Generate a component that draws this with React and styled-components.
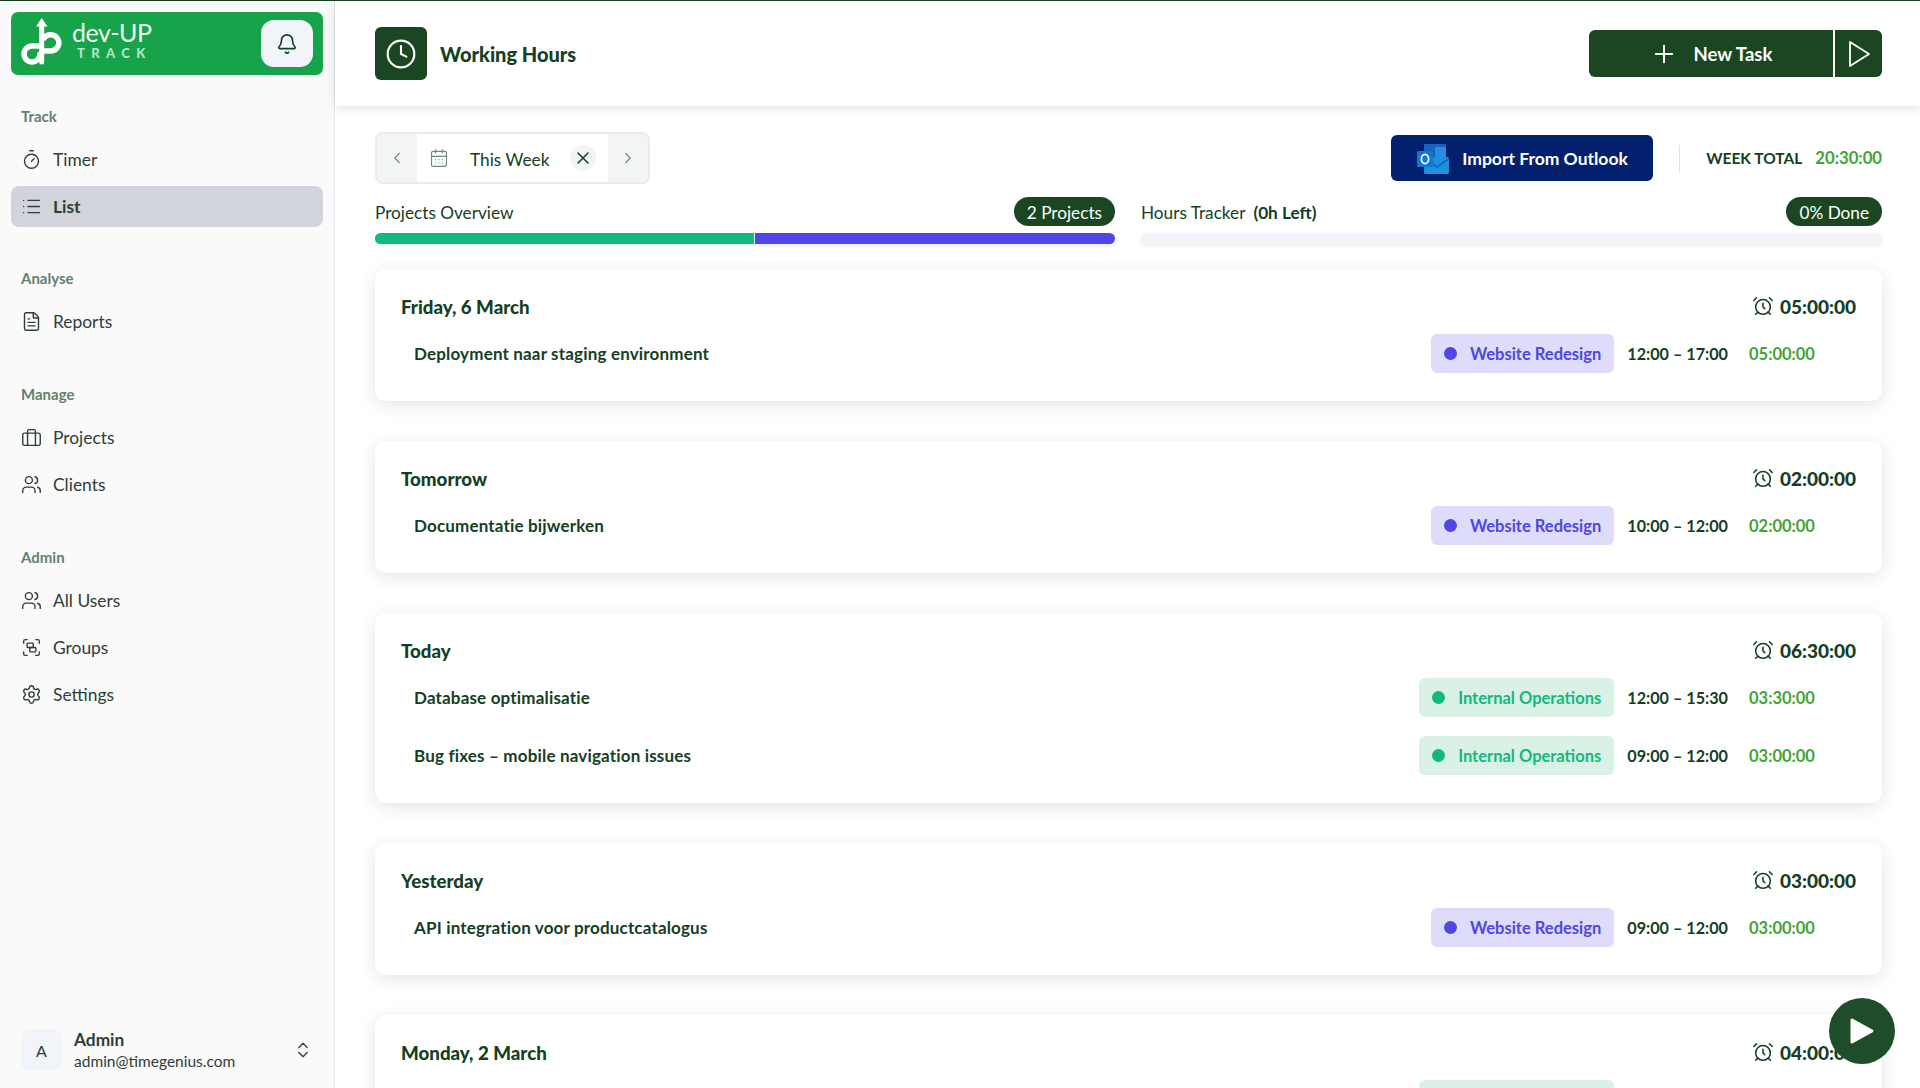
import React from "react";
import styled, { createGlobalStyle } from "styled-components";
import {
  Timer, List, FileText, Users, Group, Settings, Bell, Clock, AlarmClock,
  CalendarDays, X, ChevronLeft, ChevronRight, ChevronsUpDown, Plus,
} from "lucide-react";

const Global = createGlobalStyle`
  html, body { margin: 0; padding: 0; height: 100%; }
  body { font-family: "Lato", "Liberation Sans", sans-serif; color: #14401f; background: #fff; }
  * { box-sizing: border-box; }
`;

const Page = styled.div`
  display: flex;
  height: 1088px;
  overflow: hidden;
  border-top: 1px solid #14401f;
`;
const Sidebar = styled.aside`
  width: 335px;
  flex: none;
  display: flex;
  flex-direction: column;
  background: #fafafa;
  border-right: 1px solid #e5e7eb;
  padding: 11px 11px 0 11px;
`;
const LogoBar = styled.div`
  height: 63px;
  background: #16a34a;
  border-radius: 7px;
  display: flex;
  align-items: center;
  justify-content: space-between;
  padding: 0 10px 0 10px;
  color: #fff;
`;
const Brand = styled.div`
  display: flex;
  align-items: center;
  gap: 9px;
`;
const BrandText = styled.div`
  display: flex;
  flex-direction: column;
  align-items: flex-start;
  padding-bottom: 7px;
`;
const BrandName = styled.span`
  font-size: 25px;
  line-height: 22px;
  font-weight: 400;
  color: #ecfdf3;
  letter-spacing: -0.5px;
`;
const BrandSub = styled.span`
  font-size: 13px;
  line-height: 12px;
  margin-top: 4px;
  font-weight: 900;
  letter-spacing: 6.4px;
  color: #b4e4c6;
  padding-left: 5px;
`;
const BellButton = styled.div`
  width: 52px;
  height: 47px;
  border-radius: 13px;
  background: #f1f5f9;
  display: flex;
  align-items: center;
  justify-content: center;
  color: #14401f;
`;
const Section = styled.div`
  margin-top: ${(p) => p.$top}px;
  display: flex;
  flex-direction: column;
  gap: 6px;
`;
const SectionLabel = styled.div`
  font-size: 15px;
  line-height: 15px;
  font-weight: 700;
  color: #64806e;
  padding-left: 10px;
  margin-bottom: 9px;
`;
const NavItem = styled.div`
  height: 41px;
  display: flex;
  align-items: center;
  gap: 11px;
  padding-left: 10px;
  border-radius: 8px;
  font-size: 17.4px;
  font-weight: ${(p) => (p.$active ? 700 : 400)};
  color: #2f3e36;
  background: ${(p) => (p.$active ? "#d1d5db" : "transparent")};
  svg { width: 21px; height: 21px; flex: none; }
`;
const UserFooter = styled.div`
  margin-top: auto;
  height: 42px;
  margin-bottom: 17px;
  display: flex;
  align-items: center;
  padding-left: 10px;
  padding-right: 10px;
`;
const Avatar = styled.div`
  width: 41px;
  height: 42px;
  border-radius: 9px;
  background: #f1f5f9;
  display: flex;
  align-items: center;
  justify-content: center;
  font-size: 16px;
  color: #2f3e36;
`;
const UserInfo = styled.div`
  flex: 1;
  padding-left: 12px;
  color: #2f3e36;
`;
const UserName = styled.div`
  font-size: 17.3px;
  line-height: 20px;
  font-weight: 700;
  padding-top: 1px;
`;
const UserMail = styled.div`
  font-size: 15.5px;
  line-height: 20px;
  margin-top: 1px;
`;

const Main = styled.main`
  flex: 1;
  min-width: 0;
  display: flex;
  flex-direction: column;
  background: #fff;
  position: relative;
`;
const Header = styled.header`
  height: 105px;
  flex: none;
  display: flex;
  align-items: center;
  justify-content: space-between;
  padding: 0 38px 0 40px;
  background: #fff;
  box-shadow: 0 2px 10px rgba(0, 0, 0, 0.12);
  position: relative;
`;
const TitleGroup = styled.div`
  display: flex;
  align-items: center;
  gap: 13px;
`;
const TitleIcon = styled.div`
  width: 52px;
  height: 53px;
  border-radius: 6px;
  background: #1a4721;
  color: #fff;
  display: flex;
  align-items: center;
  justify-content: center;
`;
const Title = styled.h1`
  margin: 0;
  font-size: 20px;
  font-weight: 900;
  color: #14401f;
`;
const SplitButton = styled.div`
  display: flex;
  gap: 2px;
  height: 47px;
  color: #fff;
`;
const NewTask = styled.div`
  width: 244px;
  background: #1a4721;
  border-radius: 6px 0 0 6px;
  display: flex;
  align-items: center;
  justify-content: center;
  gap: 16px;
  font-size: 18.6px;
  font-weight: 700;
`;
const RunPart = styled.div`
  width: 47px;
  background: #1a4721;
  border-radius: 0 6px 6px 0;
  display: flex;
  align-items: center;
  justify-content: center;
`;
const Content = styled.div`
  flex: 1;
  min-height: 0;
  overflow: hidden;
  padding: 26px 38px 0 40px;
`;
const Toolbar = styled.div`
  display: flex;
  align-items: center;
  justify-content: space-between;
  height: 52px;
`;
const DatePicker = styled.div`
  width: 275px;
  height: 52px;
  border: 2px solid #e9eaec;
  border-radius: 8px;
  display: flex;
  overflow: hidden;
  background: #f3f4f6;
`;
const DateNav = styled.div`
  width: 40px;
  display: flex;
  align-items: center;
  justify-content: center;
  color: #6f8a78;
`;
const DateBody = styled.div`
  flex: 1;
  background: #fff;
  display: flex;
  align-items: center;
  padding: 0 12px 0 12px;
  font-size: 17.3px;
  color: #14401f;
`;
const DateText = styled.span`
  flex: 1;
  padding-left: 21px;
  padding-top: 2px;
`;
const ClearButton = styled.span`
  width: 26px;
  height: 26px;
  border-radius: 50%;
  background: #f3f4f6;
  display: flex;
  align-items: center;
  justify-content: center;
`;
const ToolbarRight = styled.div`
  display: flex;
  align-items: center;
`;
const OutlookButton = styled.div`
  width: 262px;
  height: 46px;
  border-radius: 6px;
  background: #03206f;
  color: #fff;
  display: flex;
  align-items: center;
  gap: 13px;
  padding-left: 26px;
  padding-top: 1px;
  font-size: 17.5px;
  font-weight: 700;
`;
const Divider = styled.div`
  width: 1px;
  height: 27px;
  background: #dbe5df;
  margin: 0 26px;
`;
const WeekLabel = styled.span`
  font-size: 15.5px;
  font-weight: 700;
  color: #14401f;
`;
const WeekValue = styled.span`
  font-size: 16.7px;
  font-weight: 700;
  color: #3fa535;
  margin-left: 13px;
`;
const Overview = styled.div`
  display: grid;
  grid-template-columns: 740px 741px;
  column-gap: 26px;
  margin-top: 13px;
`;
const OverviewCol = styled.div`
  display: flex;
  flex-direction: column;
  min-width: 0;
`;
const OverviewHead = styled.div`
  display: flex;
  align-items: center;
  justify-content: space-between;
  height: 29px;
  font-size: 17.2px;
  color: #14401f;
`;
const OverviewLabel = styled.span`
  padding-top: 2px;
`;
const Strong = styled.strong`
  font-weight: 700;
  margin-left: 8px;
`;
const Pill = styled.span`
  height: 29px;
  padding: 1px 13px 0;
  border-radius: 15px;
  background: #1a4721;
  color: #fff;
  display: flex;
  align-items: center;
  font-size: 17.2px;
`;
const Bar = styled.div`
  margin-top: 7px;
  height: 11px;
  border-radius: 6px;
  background: #f1f4f9;
  overflow: hidden;
  display: flex;
  gap: 1px;
  box-shadow: 0 2px 4px rgba(0, 0, 0, 0.08);
`;
const BarPart = styled.div`
  background: ${(p) => p.$color};
`;
const Cards = styled.div`
  margin-top: 25px;
  display: flex;
  flex-direction: column;
  gap: 40px;
`;
const Card = styled.section`
  background: #fff;
  border-radius: 11px;
  padding: 26px 26px 28px;
  box-shadow: 0 4px 18px rgba(0, 0, 0, 0.11);
`;
const CardHead = styled.div`
  display: flex;
  align-items: center;
  justify-content: space-between;
  height: 22px;
  margin-bottom: 17px;
`;
const DayName = styled.h2`
  margin: 0;
  padding-top: 2px;
  font-size: 18.7px;
  font-weight: 900;
  color: #14401f;
`;
const DayTotal = styled.div`
  display: flex;
  align-items: center;
  gap: 6px;
  font-size: 19px;
  font-weight: 900;
  color: #14401f;
`;
const Rows = styled.div`
  display: flex;
  flex-direction: column;
  gap: 19px;
`;
const Row = styled.div`
  display: flex;
  align-items: center;
  height: 39px;
  padding: 0 39px 0 13px;
`;
const TaskName = styled.div`
  flex: 1;
  font-size: 17px;
  letter-spacing: 0.17px;
  font-weight: 700;
  color: #14401f;
`;
const Chip = styled.div`
  height: 39px;
  border-radius: 6px;
  padding: 0 13px;
  display: flex;
  align-items: center;
  gap: 13px;
  font-size: 16.5px;
  font-weight: 700;
  background: ${(p) => (p.$kind === "web" ? "#dedcfb" : "#daf2e5")};
  color: ${(p) => (p.$kind === "web" ? "#4f46e5" : "#10b981")};
`;
const Dot = styled.span`
  width: 13px;
  height: 13px;
  border-radius: 50%;
  background: currentColor;
`;
const Times = styled.div`
  margin-left: 13px;
  font-size: 16.2px;
  font-weight: 700;
  color: #14401f;
`;
const Duration = styled.div`
  margin-left: 21px;
  width: 68px;
  font-size: 16.5px;
  font-weight: 700;
  color: #3fa535;
`;
const FloatingPlay = styled.div`
  position: absolute;
  left: 1494px;
  top: 998px;
  width: 66px;
  height: 66px;
  border-radius: 50%;
  background: #1f4d2b;
  display: flex;
  align-items: center;
  justify-content: center;
`;
const FloatLayer = styled.div`
  position: fixed;
  left: 335px;
  top: 0;
`;

const LogoMark = () => (
  <svg width="42" height="48" viewBox="0 0 42 48" fill="none" style={{ marginBottom: 4 }}>
    <path d="M20.7 0 26.5 8.5H23.2V44a2.5 2.5 0 0 1-5 0V8.5H15Z" fill="#fff" />
    <path d="M19 28H11A8 8 0 1 0 19 36" stroke="#fff" strokeWidth="5.5" strokeLinecap="round" />
    <path d="M22 33H30.5A8.2 8.2 0 1 0 23 20" stroke="#fff" strokeWidth="5.5" strokeLinecap="round" />
  </svg>
);
const Suitcase = () => (
  <svg viewBox="0 0 24 24" fill="none" stroke="currentColor" strokeWidth="1.6" strokeLinejoin="round">
    <rect x="2" y="7" width="20" height="14" rx="2" />
    <path d="M7.5 7v14M16.5 7v14M7.5 7V5a2 2 0 0 1 2-2h5a2 2 0 0 1 2 2v2" />
  </svg>
);
const OutlookIcon = () => (
  <svg width="32" height="30" viewBox="0 0 32 30">
    <rect x="7" y="0" width="22" height="15" rx="1" fill="#1565c0" />
    <rect x="18" y="3" width="11" height="10" fill="#2a8be0" />
    <rect x="7" y="13" width="25" height="17" rx="1.5" fill="#1e90e0" />
    <path d="M7 13 20 22 32 13V16L20 24 7 16Z" fill="#0f6cc0" />
    <rect x="0" y="7" width="16" height="16" rx="1.5" fill="#1177d6" />
    <ellipse cx="8" cy="15" rx="3.6" ry="4.6" fill="none" stroke="#fff" strokeWidth="1.7" />
  </svg>
);

const days = [
  { name: "Friday, 6 March", total: "05:00:00", rows: [["Deployment naar staging environment", "web", "12:00  –  17:00", "05:00:00"]] },
  { name: "Tomorrow", total: "02:00:00", rows: [["Documentatie bijwerken", "web", "10:00  –  12:00", "02:00:00"]] },
  { name: "Today", total: "06:30:00", rows: [
    ["Database optimalisatie", "int", "12:00  –  15:30", "03:30:00"],
    ["Bug fixes – mobile navigation issues", "int", "09:00  –  12:00", "03:00:00"],
  ] },
  { name: "Yesterday", total: "03:00:00", rows: [["API integration voor productcatalogus", "web", "09:00  –  12:00", "03:00:00"]] },
  { name: "Monday, 2 March", total: "04:00:00", rows: [["Code review sprint", "int", "09:00  –  13:00", "04:00:00"]] },
];

export default function App() {
  return (
    <>
      <Global />
      <Page>
        <Sidebar>
          <LogoBar>
            <Brand>
              <LogoMark />
              <BrandText>
                <BrandName>dev-UP</BrandName>
                <BrandSub>TRACK</BrandSub>
              </BrandText>
            </Brand>
            <BellButton><Bell size={22} strokeWidth={1.8} /></BellButton>
          </LogoBar>
          <Section $top={34}>
            <SectionLabel>Track</SectionLabel>
            <NavItem><Timer strokeWidth={1.6} />Timer</NavItem>
            <NavItem $active><List strokeWidth={1.6} />List</NavItem>
          </Section>
          <Section $top={44}>
            <SectionLabel>Analyse</SectionLabel>
            <NavItem><FileText strokeWidth={1.6} />Reports</NavItem>
          </Section>
          <Section $top={45}>
            <SectionLabel>Manage</SectionLabel>
            <NavItem><Suitcase />Projects</NavItem>
            <NavItem><Users strokeWidth={1.6} />Clients</NavItem>
          </Section>
          <Section $top={45}>
            <SectionLabel>Admin</SectionLabel>
            <NavItem><Users strokeWidth={1.6} />All Users</NavItem>
            <NavItem><Group strokeWidth={1.6} />Groups</NavItem>
            <NavItem><Settings strokeWidth={1.6} />Settings</NavItem>
          </Section>
          <UserFooter>
            <Avatar>A</Avatar>
            <UserInfo>
              <UserName>Admin</UserName>
              <UserMail>admin@timegenius.com</UserMail>
            </UserInfo>
            <ChevronsUpDown size={20} strokeWidth={1.6} color="#2f3e36" />
          </UserFooter>
        </Sidebar>
        <Main>
          <Header>
            <TitleGroup>
              <TitleIcon><Clock size={32} strokeWidth={1.6} /></TitleIcon>
              <Title>Working Hours</Title>
            </TitleGroup>
            <SplitButton>
              <NewTask><Plus size={28} strokeWidth={1.7} />New Task</NewTask>
              <RunPart>
                <svg width="26" height="28" viewBox="0 0 26 28" fill="none" stroke="#fff" strokeWidth="1.8" strokeLinejoin="round"><path d="M4 2 23 14 4 26Z" /></svg>
              </RunPart>
            </SplitButton>
          </Header>
          <Content>
            <Toolbar>
              <DatePicker>
                <DateNav><ChevronLeft size={18} strokeWidth={1.6} /></DateNav>
                <DateBody>
                  <CalendarDays size={20} strokeWidth={1.4} color="#6f8a78" />
                  <DateText>This Week</DateText>
                  <ClearButton><X size={20} strokeWidth={1.8} /></ClearButton>
                </DateBody>
                <DateNav><ChevronRight size={18} strokeWidth={1.6} /></DateNav>
              </DatePicker>
              <ToolbarRight>
                <OutlookButton><OutlookIcon />Import From Outlook</OutlookButton>
                <Divider />
                <WeekLabel>WEEK TOTAL</WeekLabel>
                <WeekValue>20:30:00</WeekValue>
              </ToolbarRight>
            </Toolbar>
            <Overview>
              <OverviewCol>
                <OverviewHead><OverviewLabel>Projects Overview</OverviewLabel><Pill>2 Projects</Pill></OverviewHead>
                <Bar>
                  <BarPart $color="#10b981" style={{ width: "51.2%" }} />
                  <BarPart $color="#4f46e5" style={{ flex: 1 }} />
                </Bar>
              </OverviewCol>
              <OverviewCol>
                <OverviewHead>
                  <OverviewLabel>Hours Tracker<Strong>(0h Left)</Strong></OverviewLabel>
                  <Pill>0% Done</Pill>
                </OverviewHead>
                <Bar />
              </OverviewCol>
            </Overview>
            <Cards>
              {days.map((d) => (
                <Card key={d.name}>
                  <CardHead>
                    <DayName>{d.name}</DayName>
                    <DayTotal><AlarmClock size={22} strokeWidth={1.7} />{d.total}</DayTotal>
                  </CardHead>
                  <Rows>
                    {d.rows.map((r) => (
                      <Row key={r[0]}>
                        <TaskName>{r[0]}</TaskName>
                        <Chip $kind={r[1]}>
                          <Dot />
                          {r[1] === "web" ? "Website Redesign" : "Internal Operations"}
                        </Chip>
                        <Times>{r[2]}</Times>
                        <Duration>{r[3]}</Duration>
                      </Row>
                    ))}
                  </Rows>
                </Card>
              ))}
            </Cards>
          </Content>
        </Main>
      </Page>
      <FloatLayer>
        <FloatingPlay>
          <svg width="26" height="28" viewBox="0 0 26 28" fill="#fff" stroke="#fff" strokeWidth="3" strokeLinejoin="round"><path d="M3 3 23 14 3 25Z" /></svg>
        </FloatingPlay>
      </FloatLayer>
    </>
  );
}
